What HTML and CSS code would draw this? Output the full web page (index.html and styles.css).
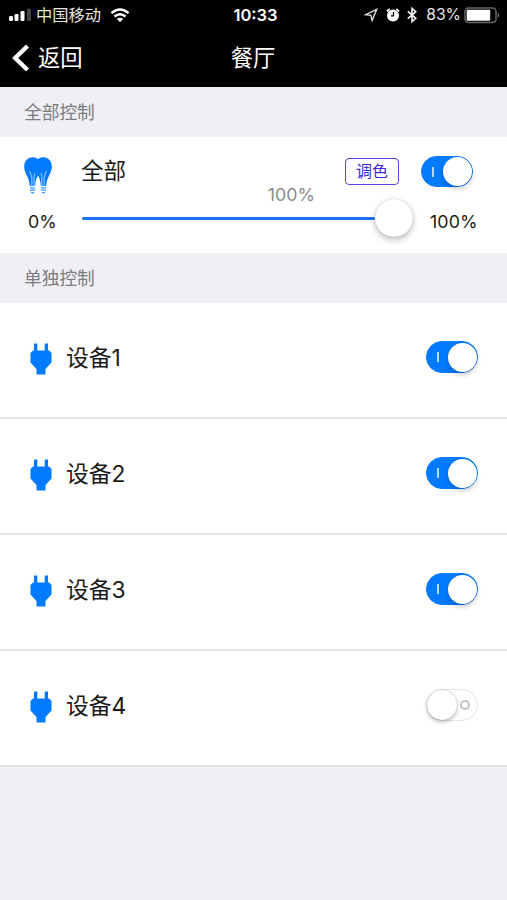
FILE: index.html
```html
<!DOCTYPE html>
<html lang="zh-CN">

<head>
  <meta charset="utf-8">
  <title>餐厅</title>
  <link rel="stylesheet" href="styles.css">
</head>

<body>
  <svg class="defs">
    <symbol id="plug" viewBox="0 0 22 32">
      <path d="M4 0.500h3.300v7h7.400v-7H18v7h1.200L21.500 10v9.500L15.500 26v5.500H6.500V26L0.500 19.500V10L3 7.500h1z" />
    </symbol>
  </svg>

  <header class="header">
    <div class="status">
      <div class="status-left">
        <svg class="signal" width="23" height="14" viewBox="0 0 23 14">
          <rect x="1" y="8" width="4" height="5" rx="1.200" />
          <rect x="6.500" y="6" width="4" height="7" rx="1.200" />
          <rect x="12.500" y="3" width="4" height="10" rx="1.200" />
          <rect class="dim" x="19" y="0.500" width="4" height="12.500" rx="1.200" />
        </svg>
        <span class="carrier">中国移动</span>
        <svg class="wifi" width="20" height="14" viewBox="0 0 20 14">
          <path d="M1.400 5.200Q10-2.200 18.600 5.200" />
          <path d="M4.500 8.500Q10 3.800 15.500 8.500" />
          <path class="dot" d="M6.800 11Q10 8.400 13.200 11L10 14z" />
        </svg>
      </div>
      <div class="time">10:33</div>
      <div class="status-right">
        <svg width="14" height="14" viewBox="0 0 14 14">
          <path d="M12.700 1.300L1.700 6.700l5.200 0.600 1.200 5.200z" fill="none" stroke="#ddd" stroke-width="1.400" />
        </svg>
        <svg class="alarm" width="14" height="14" viewBox="0 0 14 14">
          <circle cx="7" cy="7.400" r="6" fill="#fff" />
          <path d="M0.900 3.300L3.700 0.900M13.100 3.300L10.300 0.900" stroke="#fff" stroke-width="1.700" />
          <path d="M7.500 4v3.900H5" fill="none" stroke="#000" stroke-width="1.300" />
        </svg>
        <svg class="bluetooth" width="10" height="16" viewBox="0 0 10 16">
          <path d="M0.800 4.300l8 7L5 14.600V1.400l3.800 3.300-8 7" fill="none" stroke="#f4f4f4" stroke-width="1.600" />
        </svg>
        <span class="percent">83%</span>
        <svg class="battery" width="36" height="17" viewBox="0 0 36 17">
          <rect x="1" y="1" width="31" height="14.500" rx="3.500" fill="none" stroke="#666" stroke-width="1.500" />
          <rect x="2.700" y="2.800" width="23.500" height="11" rx="1" fill="#fff" />
          <path d="M33.700 5.500q2.600 2.700 0 5.500z" fill="#777" />
        </svg>
      </div>
    </div>
    <div class="navbar">
      <a class="back">
        <svg width="18" height="30" viewBox="0 0 18 30">
          <path d="M15.500 3L3.200 15l12.300 12" />
        </svg>
        返回
      </a>
      <div class="title">餐厅</div>
      <div></div>
    </div>
  </header>

  <div class="section">全部控制</div>
  <div class="group">
    <div class="all">
      <svg class="bulb" width="28" height="38" viewBox="0 0 28 38">
        <path class="glass" d="M14 2.200C10.500-0.800 5 0 2.200 3.200C-0.500 6.500-0.200 11.500 1.500 15.500C3.200 19.500 5.500 23 5.800 29h5.400C11.500 24 12.300 21 14 18.500C15.700 21 16.500 24 16.800 29h5.400C22.500 23 24.800 19.500 26.500 15.500C28.200 11.500 28.500 6.500 25.800 3.200C23 0 17.500-0.800 14 2.200z" />
        <path class="wire" d="M7.900 29v-8.500L5.700 14M10.100 29v-9.500l0.900-3.500M17.900 29v-9.500l-0.900-3.500M20.100 29v-8.500L22.300 14" />
        <path class="screw" d="M6 30.800h5.200M6 33.200h5.200M7 35.600h3.200M16.800 30.800h5.200M16.800 33.200h5.200M17.800 35.600h3.200" />
      </svg>
      <span class="all-name">全部</span>
      <button class="color-btn">调色</button>
      <div class="switch on"><i class="mark"></i><i class="knob"></i></div>
    </div>
    <div class="range">
      <span class="min">0%</span>
      <div class="slider">
        <span class="value">100%</span>
        <div class="track"></div>
        <div class="thumb"></div>
      </div>
      <span class="max">100%</span>
    </div>
  </div>

  <div class="section">单独控制</div>
  <div class="list">
    <div class="item">
      <svg class="plug"><use href="#plug" /></svg>
      <span class="name">设备1</span>
      <div class="switch on"><i class="mark"></i><i class="knob"></i></div>
    </div>
    <div class="item">
      <svg class="plug"><use href="#plug" /></svg>
      <span class="name">设备2</span>
      <div class="switch on"><i class="mark"></i><i class="knob"></i></div>
    </div>
    <div class="item">
      <svg class="plug"><use href="#plug" /></svg>
      <span class="name">设备3</span>
      <div class="switch on"><i class="mark"></i><i class="knob"></i></div>
    </div>
    <div class="item">
      <svg class="plug"><use href="#plug" /></svg>
      <span class="name">设备4</span>
      <div class="switch"><i class="knob"></i><i class="mark"></i></div>
    </div>
  </div>
</body>

</html>
```
FILE: styles.css
```css
* {
  margin: 0;
  padding: 0;
  box-sizing: border-box;
}

body {
  min-height: 900px;
  background: #efeff4;
  color: #1a1a1a;
  font-family: Inter, "Noto Sans CJK SC", sans-serif;
}

svg {
  display: block;
  flex: none;
}

.defs {
  display: none;
}

/* 顶部 */
.header {
  height: 87px;
  background: #000;
  color: #fff;
}

.status {
  display: grid;
  grid-template-columns: 1fr auto 1fr;
  align-items: center;
  height: 30px;
  padding: 0 8px;
  font-size: 16px;
  line-height: 30px;
}

.status-left,
.status-right {
  display: flex;
  align-items: center;
}

.status-right {
  justify-content: flex-end;
}

.signal {
  fill: #fff;
}

.signal .dim {
  fill: #444;
}

.carrier {
  margin: 0 9px 0 5px;
  font-size: 16.3px;
  color: #e5e5e5;
}

.wifi {
  fill: none;
  stroke: #fff;
  stroke-width: 2.4;
}

.wifi .dot {
  fill: #fff;
  stroke: none;
}

.time {
  padding-left: 19px;
  margin-right: 15px;
  font-size: 16.5px;
  font-weight: 600;
}

.alarm {
  margin-left: 8px;
}

.bluetooth {
  margin-left: 7px;
}

.percent {
  margin: 0 3px 0 9px;
  font-size: 15.7px;
  color: #e5e5e5;
}

.battery {
  margin-right: -1px;
}

.navbar {
  display: grid;
  grid-template-columns: 1fr auto 1fr;
  align-items: center;
  height: 56px;
  padding: 0 13px 0 12px;
  font-size: 22.3px;
  line-height: 56px;
}

.back {
  display: flex;
  align-items: center;
  gap: 8px;
}

.back path {
  fill: none;
  stroke: #fff;
  stroke-width: 4.4;
}

.section {
  height: 50px;
  padding: 1px 0 0 24px;
  font-size: 17.7px;
  line-height: 50px;
  color: #7c7c80;
}

/* 全部控制 */
.group {
  height: 116px;
  padding: 18px 29px 0 24px;
  background: #fff;
}

.all {
  display: flex;
  align-items: center;
  height: 44px;
  padding: 0 5px 12px 0;
}

.bulb {
  margin-top: 10px;
}

.bulb .glass {
  fill: #007aff;
}

.bulb .wire {
  fill: none;
  stroke: #b5d8ff;
  stroke-width: 0.9;
}

.bulb .screw {
  stroke: #3c98ff;
  stroke-width: 1.3;
}

.all-name {
  flex: 1;
  margin-left: 29px;
  font-size: 22.5px;
  line-height: 32px;
}

.color-btn {
  width: 54px;
  height: 27px;
  margin-right: 22px;
  border: 1.5px solid #5543e0;
  border-radius: 4px;
  background: #fff;
  color: #3b28dc;
  font-family: inherit;
  font-size: 16px;
  line-height: 22px;
}

.all .switch {
  height: 31px;
  margin-top: 1px;
}

.range {
  display: flex;
  align-items: center;
  height: 38px;
  font-size: 17.8px;
}

.min {
  width: 58px;
  padding: 6px 0 0 4px;
}

.max {
  width: 48px;
  margin-left: 17px;
  padding-top: 6px;
  letter-spacing: 0.1px;
}

.slider {
  position: relative;
  display: flex;
  flex: 1;
  align-items: center;
}

.track {
  flex: 1;
  height: 3px;
  margin-top: 1px;
  border-radius: 2px;
  background: #1a73f0;
}

.thumb {
  width: 38px;
  height: 38px;
  border-radius: 50%;
  background: #fff;
  box-shadow: 0 0 1px rgba(0, 0, 0, .35), 0 3px 6px rgba(0, 0, 0, .25);
}

.value {
  position: absolute;
  top: -15px;
  right: 98px;
  line-height: 22px;
  color: #8c8c8c;
}

/* 开关 */
.switch {
  display: flex;
  flex: none;
  align-items: center;
  width: 52px;
  height: 32px;
  border: 1px solid #e6e6e6;
  border-radius: 16px;
  background: #fff;
}

.switch .knob {
  width: 30px;
  height: 30px;
  border-radius: 50%;
  background: #fff;
  box-shadow: 0 0 1px rgba(0, 0, 0, .3), 0 2px 4px rgba(0, 0, 0, .28);
}

.switch .mark {
  width: 10px;
  height: 10px;
  margin-left: 3px;
  border: 2px solid #c2c2c2;
  border-radius: 50%;
}

.switch.on {
  border-color: #007aff;
  background: #007aff;
}

.switch.on .mark {
  width: 2px;
  height: 10px;
  margin: 0 9px 0 10px;
  border: 0;
  border-radius: 0;
  background: #b5d8ff;
}

.switch.on .knob {
  width: 29px;
  height: 29px;
  box-shadow: 0 3px 5px rgba(0, 0, 0, .2);
}

/* 设备列表 */
.item {
  display: flex;
  align-items: center;
  height: 116px;
  padding: 0 29px 6px 30px;
  border-bottom: 2px solid #e4e4e6;
  background: #fff;
}

.plug {
  width: 22px;
  height: 32px;
  margin-top: 4px;
  fill: #007aff;
}

.name {
  flex: 1;
  margin: -2px 0 0 14px;
  font-size: 22.8px;
}
```
